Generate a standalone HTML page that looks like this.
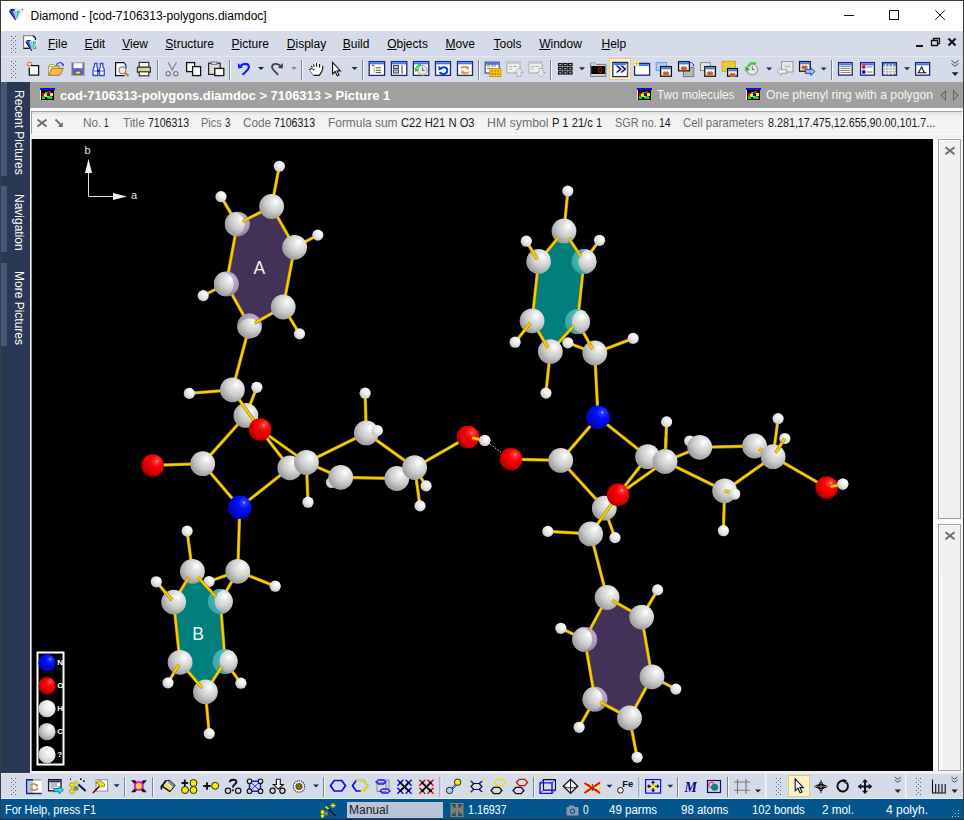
<!DOCTYPE html>
<html><head><meta charset="utf-8"><style>*{margin:0;padding:0;box-sizing:border-box}
html,body{width:964px;height:820px;overflow:hidden;background:#f0f0f0;font-family:"Liberation Sans",sans-serif;font-size:12px;color:#000}
.a{position:absolute}
svg.a{overflow:visible}
#frame{left:0;top:0;width:964px;height:820px;border:1px solid #3c3c3c;border-bottom-color:#2a2a2a;z-index:50}
#title{left:0;top:0;width:964px;height:31px;background:#fff}
.tt{font-size:12px;line-height:14px;color:#000;white-space:nowrap}
#menu{left:1px;top:31px;width:962px;height:25px;background:#d6dbe9}
#tb1{left:1px;top:56px;width:962px;height:26px;background:#d6dbe9;border-top:1px solid #e4e7f0}
.mi{position:absolute;top:37px;font-size:12px;color:#000;line-height:14px;white-space:nowrap}
.mi u{text-decoration:underline;text-underline-offset:1px}
#side{left:1px;top:82px;width:29px;height:691px;background:#293955}
#side .strip{left:0;width:6px;background:#44587a}
.sidet{color:#fff;font-size:12px;line-height:12px;white-space:nowrap;transform-origin:0 0;transform:rotate(90deg)}
#hdr{left:30px;top:82px;width:933px;height:26px;background:#a0a0a0}
.ht{top:88px;font-size:13px;font-weight:bold;color:#fff;line-height:15px;white-space:nowrap}
.htr{top:88px;font-size:12px;color:#f4f4f4;line-height:15px;white-space:nowrap}
#info{left:30px;top:108px;width:933px;height:31px;background:#fbfbfb}
#ibox{left:1px;top:3px;width:931px;height:23px;background:linear-gradient(#dedede,#eeeeee 3px,#f3f3f3 6px);border:1px solid #a0a0a0;border-right:none;border-bottom:none}
#istrip{left:1px;top:27px;width:931px;height:3px;background:#efefef}
.il{top:116px;color:#6d6d6d;line-height:14px;white-space:nowrap}
.iv{top:116px;color:#1a1a1a;line-height:14px;white-space:nowrap}
#canvas{left:32px;top:139px;width:901px;height:632px;background:#000}
#rp{left:933px;top:139px;width:30px;height:633px;background:#f8f8f8}
.rbox{left:5px;width:23px;background:#f0f0f0;border:1px solid #a0a0a0;box-shadow:inset 1px 1px #ffffff}
#tb2{left:1px;top:773px;width:962px;height:26px;background:#d6dbe9;border-top:1px solid #e6e9f2;border-bottom:1px solid #eceef4}
#status{left:1px;top:799px;width:962px;height:20px;background:#01568f}
.st{top:805px;color:#fff;line-height:12px;white-space:nowrap}
</style></head><body>
<div id="title" class="a"></div>
<div class="a tt" style="left:30.5px;top:9px">Diamond - [cod-7106313-polygons.diamdoc]</div>
<svg class="a" style="left:0;top:0;z-index:5" width="964" height="820"><path d="M9 11l2-2h10.5l2 2-7 9h-1z" fill="#e4f2f6" stroke="#b8c8d0" stroke-width="0.5"/><path d="M9 11l6.5 9 1-1.5-3.5-7.5z" fill="#2858e0"/><path d="M9.3 10.6l1.8-1.6h3.4v1.9h-4z" fill="#20208a"/><path d="M16.8 10.8h3.6l-3.3 7.5-1-0.5z" fill="#3cc0b4"/><path d="M13.5 11h3l0.3 8.5h-1.2z" fill="#9ec4f0"/><path d="M9.3 11.3l6.2 8.6" stroke="#10102a" stroke-width="1"/><rect x="22" y="9" width="1" height="1" fill="#3050a0"/><path d="M844 15.5h10" stroke="#111" stroke-width="1"/><rect x="889.5" y="10.5" width="9" height="9" fill="none" stroke="#111" stroke-width="1"/><path d="M935.3 10.3l9.6 9.6M944.9 10.3l-9.6 9.6" stroke="#111" stroke-width="1"/><rect x="916" y="45" width="7" height="2" fill="#111"/><path d="M931.5 40.5h6v5h-6z" fill="none" stroke="#111" stroke-width="1.3"/><path d="M933.5 40.5v-2h6v5h-2" fill="none" stroke="#111" stroke-width="1.3"/><path d="M948.5 38.5l7 7M955.5 38.5l-7 7" stroke="#111" stroke-width="2.2"/><rect x="40.0" y="88.0" width="15" height="2" fill="#0a0af0"/><rect x="41.0" y="90.0" width="13" height="10" fill="#000"/><rect x="40.0" y="90.0" width="1" height="10" fill="#e8e8e8"/><rect x="42.0" y="93.0" width="3" height="3" fill="#ff0000"/><rect x="45.0" y="92.0" width="3" height="3" fill="#00f000"/><rect x="48.0" y="91.0" width="3" height="3" fill="#ff0000"/><rect x="44.0" y="94.0" width="3" height="3" fill="#f8f800"/><rect x="47.0" y="93.0" width="2" height="3" fill="#0010f0"/><rect x="50.0" y="93.0" width="3" height="3" fill="#f8f800"/><rect x="47.0" y="96.0" width="2" height="2" fill="#00f8f8"/><rect x="42.0" y="96.0" width="3" height="3" fill="#00e000"/><rect x="49.0" y="96.0" width="3" height="3" fill="#00e000"/><rect x="52.0" y="97.0" width="1" height="2" fill="#ff0000"/><rect x="47.0" y="98.0" width="2" height="1" fill="#ff0000"/><rect x="42.0" y="98.0" width="1" height="1" fill="#b0a000"/><rect x="637.0" y="88.0" width="15" height="2" fill="#0a0af0"/><rect x="638.0" y="90.0" width="13" height="10" fill="#000"/><rect x="637.0" y="90.0" width="1" height="10" fill="#e8e8e8"/><rect x="639.0" y="93.0" width="3" height="3" fill="#ff0000"/><rect x="642.0" y="92.0" width="3" height="3" fill="#00f000"/><rect x="645.0" y="91.0" width="3" height="3" fill="#ff0000"/><rect x="641.0" y="94.0" width="3" height="3" fill="#f8f800"/><rect x="644.0" y="93.0" width="2" height="3" fill="#0010f0"/><rect x="647.0" y="93.0" width="3" height="3" fill="#f8f800"/><rect x="644.0" y="96.0" width="2" height="2" fill="#00f8f8"/><rect x="639.0" y="96.0" width="3" height="3" fill="#00e000"/><rect x="646.0" y="96.0" width="3" height="3" fill="#00e000"/><rect x="649.0" y="97.0" width="1" height="2" fill="#ff0000"/><rect x="644.0" y="98.0" width="2" height="1" fill="#ff0000"/><rect x="639.0" y="98.0" width="1" height="1" fill="#b0a000"/><rect x="746.0" y="88.0" width="15" height="2" fill="#0a0af0"/><rect x="747.0" y="90.0" width="13" height="10" fill="#000"/><rect x="746.0" y="90.0" width="1" height="10" fill="#e8e8e8"/><rect x="748.0" y="93.0" width="3" height="3" fill="#ff0000"/><rect x="751.0" y="92.0" width="3" height="3" fill="#00f000"/><rect x="754.0" y="91.0" width="3" height="3" fill="#ff0000"/><rect x="750.0" y="94.0" width="3" height="3" fill="#f8f800"/><rect x="753.0" y="93.0" width="2" height="3" fill="#0010f0"/><rect x="756.0" y="93.0" width="3" height="3" fill="#f8f800"/><rect x="753.0" y="96.0" width="2" height="2" fill="#00f8f8"/><rect x="748.0" y="96.0" width="3" height="3" fill="#00e000"/><rect x="755.0" y="96.0" width="3" height="3" fill="#00e000"/><rect x="758.0" y="97.0" width="1" height="2" fill="#ff0000"/><rect x="753.0" y="98.0" width="2" height="1" fill="#ff0000"/><rect x="748.0" y="98.0" width="1" height="1" fill="#b0a000"/><path d="M945.5 91v8.7l-4.4-4.35z" fill="none" stroke="#666" stroke-width="1.1"/><path d="M953.5 91v8.7l4.4-4.35z" fill="none" stroke="#666" stroke-width="1.1"/><path d="M37.5 119.5l9 7M46.5 119.5l-9 7" stroke="#6e6e6e" stroke-width="2"/><path d="M55.5 119.5l6.5 6.5" stroke="#6e6e6e" stroke-width="1.8"/><path d="M62.8 122v5h-5z" fill="#6e6e6e"/><path d="M945.5 147.3l9 7M954.5 147.3l-9 7" stroke="#6e6e6e" stroke-width="2"/><path d="M945.5 532.3l9 7M954.5 532.3l-9 7" stroke="#6e6e6e" stroke-width="2"/><rect x="940.5" y="570" width="1" height="200" fill="#ffffff"/><circle cx="322.5" cy="812" r="2.2" fill="#f0f000" stroke="#222" stroke-width="0.4"/><circle cx="322.5" cy="816" r="1.8" fill="#f0f000"/><circle cx="326" cy="813.5" r="2" fill="#8a8a30"/><path d="M325.5 806.5l10.5 9.5" stroke="#0a0a3a" stroke-width="1.6"/><path d="M325.5 806.5l3 2.7" stroke="#f0e000" stroke-width="1.8"/><path d="M333 803v5M330.5 805.5h5M331.3 803.8l3.4 3.4M334.7 803.8l-3.4 3.4" stroke="#f0f000" stroke-width="0.9"/><rect x="450.5" y="803" width="13" height="14" fill="#8a8060"/><path d="M452 804.5l3.5 3.5M462 804.5l-3.5 3.5M452 815.5l3.5-3.5M462 815.5l-3.5-3.5" stroke="#01568f" stroke-width="1.4"/><path d="M452.5 804.5h3v1.2M461.5 804.5h-3v1.2M452.5 815.5h3v-1.2M461.5 815.5h-3v-1.2" stroke="#01568f" stroke-width="1"/><rect x="566.5" y="807" width="12" height="8.5" rx="1" fill="#8a9aaa"/><rect x="569" y="805.5" width="5" height="2" fill="#8a9aaa"/><circle cx="572.5" cy="811.2" r="2.6" fill="#01568f"/><circle cx="572.5" cy="811.2" r="1.6" fill="#8a9aaa"/><rect x="958" y="816" width="1" height="1" fill="#c0d0e0"/><rect x="955" y="816" width="1" height="1" fill="#c0d0e0"/><rect x="952" y="816" width="1" height="1" fill="#c0d0e0"/><rect x="958" y="813" width="1" height="1" fill="#c0d0e0"/><rect x="955" y="813" width="1" height="1" fill="#c0d0e0"/><rect x="958" y="810" width="1" height="1" fill="#c0d0e0"/></svg>
<div id="menu" class="a"></div>
<div class="mi" style="left:48.0px"><u>F</u>ile</div><div class="mi" style="left:84.5px"><u>E</u>dit</div><div class="mi" style="left:122.2px"><u>V</u>iew</div><div class="mi" style="left:165.3px"><u>S</u>tructure</div><div class="mi" style="left:231.5px"><u>P</u>icture</div><div class="mi" style="left:286.8px"><u>D</u>isplay</div><div class="mi" style="left:342.7px"><u>B</u>uild</div><div class="mi" style="left:387.2px"><u>O</u>bjects</div><div class="mi" style="left:445.6px"><u>M</u>ove</div><div class="mi" style="left:493.5px"><u>T</u>ools</div><div class="mi" style="left:539.2px"><u>W</u>indow</div><div class="mi" style="left:601.5px"><u>H</u>elp</div>
<div id="tb1" class="a"></div>
<svg class="a" style="left:0;top:0" width="964" height="820"><rect x="11" y="36" width="1" height="1" fill="#5a6684"/><rect x="15" y="36" width="1" height="1" fill="#5a6684"/><rect x="13" y="38" width="1" height="1" fill="#5a6684"/><rect x="11" y="40" width="1" height="1" fill="#5a6684"/><rect x="15" y="40" width="1" height="1" fill="#5a6684"/><rect x="13" y="42" width="1" height="1" fill="#5a6684"/><rect x="11" y="44" width="1" height="1" fill="#5a6684"/><rect x="15" y="44" width="1" height="1" fill="#5a6684"/><rect x="13" y="46" width="1" height="1" fill="#5a6684"/><rect x="11" y="48" width="1" height="1" fill="#5a6684"/><rect x="15" y="48" width="1" height="1" fill="#5a6684"/><rect x="13" y="50" width="1" height="1" fill="#5a6684"/><rect x="11" y="52" width="1" height="1" fill="#5a6684"/><rect x="15" y="52" width="1" height="1" fill="#5a6684"/><path d="M23.6 35.7h9.5l2.5 2.5v10.2h-12z" fill="#fff" stroke="#777" stroke-width="1.1"/><path d="M23.6 48.4h9M33 35.7l2.4 2.4v2" stroke="#111" stroke-width="1.2" fill="none"/><path d="M25.5 41.5l2-1.5h10l1.5 1.5-7 9.5h-1z" fill="#e4f2f6"/><path d="M25.5 41.5l6 9.5 1-1.5-3.5-8z" fill="#2858e0"/><path d="M26 41l1.5-1h3v1.6h-3.8z" fill="#20208a"/><path d="M33 41.3h3.5l-3.3 8-1-0.5z" fill="#3cc0b4"/><path d="M29.5 41.5h3l0.3 9h-1.2z" fill="#9ec4f0"/><path d="M25.8 41.8l5.8 9" stroke="#10102a" stroke-width="1"/><rect x="11" y="61" width="1" height="1" fill="#5a6684"/><rect x="15" y="61" width="1" height="1" fill="#5a6684"/><rect x="13" y="63" width="1" height="1" fill="#5a6684"/><rect x="11" y="65" width="1" height="1" fill="#5a6684"/><rect x="15" y="65" width="1" height="1" fill="#5a6684"/><rect x="13" y="67" width="1" height="1" fill="#5a6684"/><rect x="11" y="69" width="1" height="1" fill="#5a6684"/><rect x="15" y="69" width="1" height="1" fill="#5a6684"/><rect x="13" y="71" width="1" height="1" fill="#5a6684"/><rect x="11" y="73" width="1" height="1" fill="#5a6684"/><rect x="15" y="73" width="1" height="1" fill="#5a6684"/><rect x="13" y="75" width="1" height="1" fill="#5a6684"/><rect x="11" y="77" width="1" height="1" fill="#5a6684"/><rect x="15" y="77" width="1" height="1" fill="#5a6684"/><path d="M29.5 61.5v5.6M26.7 64.3h5.6M27.5 62.3l4 4M31.5 62.3l-4 4" stroke="#e06a28" stroke-width="1.2"/><circle cx="29.5" cy="64.3" r="1.2" fill="#fff"/><path d="M31 65.6h7.6v9.6h-9.3v-7.5" fill="#fff" stroke="#111" stroke-width="1.3"/><path d="M48.8 66.5l1-2h4l1 1h4.5v2.5" fill="#fff8a8" stroke="#a89a50" stroke-width="0.9"/><path d="M48.6 75.2v-8.6h10.2v1.8" fill="#fff3a0" stroke="#a89a50" stroke-width="0.9"/><path d="M48.6 75.3l3.2-7h11.5l-3.4 7z" fill="#ffb84a" stroke="#8a7040" stroke-width="0.9"/><path d="M56.3 65.5c0.5-3 5-4 6.5-1.2" stroke="#2c40d8" stroke-width="1.2" fill="none"/><path d="M61.2 64.6l2.6-0.9 0 2.8z" fill="#2c40d8"/><rect x="71.5" y="62.5" width="13" height="13" fill="#6466d2" stroke="#b3ab8c" stroke-width="1.1"/><rect x="73.6" y="63.2" width="8.8" height="5" fill="#fff"/><rect x="74.5" y="70.6" width="7" height="4.4" fill="#555"/><rect x="75.7" y="71.6" width="4.6" height="2.2" fill="#d9d59c"/><rect x="77.2" y="68.3" width="1.6" height="0.9" fill="#3040c0"/><path d="M93 75.5v-6l1.5-3v-3h2.5v3l0.7 3v6z M99.5 75.5v-6l0.8-3v-3h2.5v3l1.5 3v6z" fill="#fff" stroke="#2f4fc8" stroke-width="1.3"/><path d="M93.7 71h3.8M100.2 71h4" stroke="#2f4fc8" stroke-width="1.1"/><path d="M97.6 69v2.5h2" stroke="#1a2a80" stroke-width="1"/><path d="M124 62.6h-8.4v13h9" fill="#fff" stroke="#111" stroke-width="1.2"/><path d="M124 62.6l2 2.5v4" fill="none" stroke="#2a2a7a" stroke-width="1.1"/><circle cx="122.4" cy="70.3" r="3.4" fill="#e8eef6" stroke="#8a8a8a" stroke-width="1.2"/><path d="M124.8 72.8l3.8 3.2" stroke="#e07818" stroke-width="2.2"/><rect x="139.2" y="62.4" width="9.6" height="5" fill="#fff" stroke="#333" stroke-width="1.2"/><rect x="137.4" y="67.2" width="13" height="5" fill="#d8d4a8" stroke="#333" stroke-width="1.2"/><rect x="139.2" y="71.8" width="9.6" height="4" fill="#fff" stroke="#333" stroke-width="1.2"/><rect x="138.6" y="68.2" width="1.2" height="1.2" fill="#e8d800"/><rect x="140.6" y="68.2" width="1.2" height="1.2" fill="#e8d800"/><rect x="157.0" y="60" width="1" height="20" fill="#7a8294"/><rect x="158.0" y="60" width="1" height="20" fill="#f4f6fa"/><path d="M168 62.4l4.8 8M176.5 62.4l-4.8 8" stroke="#868686" stroke-width="1.2"/><circle cx="168.2" cy="73.7" r="2.2" fill="none" stroke="#777" stroke-width="1.1"/><circle cx="175.8" cy="73.7" r="2.2" fill="none" stroke="#777" stroke-width="1.1"/><rect x="186.6" y="62.6" width="8" height="9" fill="#fff" stroke="#111" stroke-width="1.3"/><rect x="192.6" y="66.6" width="8" height="9" fill="#fff" stroke="#111" stroke-width="1.3"/><rect x="208.6" y="63.2" width="11.6" height="11.2" fill="#dcdcdc" stroke="#222" stroke-width="1.2"/><rect x="211.5" y="62" width="5.5" height="2.3" fill="#eee" stroke="#555" stroke-width="0.8"/><rect x="214.8" y="68.4" width="9" height="7.2" fill="#fff" stroke="#111" stroke-width="1.3"/><rect x="229.0" y="60" width="1" height="20" fill="#7a8294"/><rect x="230.0" y="60" width="1" height="20" fill="#f4f6fa"/><path d="M240 66.5c2-3 8-4 9 0c0.6 2.5-3 5-6.5 8.3" stroke="#0a22ff" stroke-width="2.1" fill="none"/><path d="M237.8 63l0.4 5.6 5-0.9z" fill="#0a22ff"/><path d="M258.0 67.0h6l-3 3z" fill="#111a40"/><path d="M281 66.5c-2-3-8-4-9 0c-0.6 2.5 3 5 6.2 8.3" stroke="#404040" stroke-width="1.8" fill="none"/><path d="M283 63l-0.3 5.6-5-0.9z" fill="#404040"/><path d="M291.0 67.0h6l-3 3z" fill="#8a8a8a"/><rect x="301.0" y="60" width="1" height="20" fill="#7a8294"/><rect x="302.0" y="60" width="1" height="20" fill="#f4f6fa"/><path d="M309.2 69.6l1.8-1.5 1.6 0.2-1-2.6 2-2 1.8-1 1.4-0.4 1.6 0.6 1.6 1 1.8 1.2 1.4 0.8v2.8l-1.4 3.6-2.2 3.1h-5.6z" fill="#fff"/><path d="M313.6 75.4h5.6M319.2 75.4l2.2-3.2 1.3-3.6v-2.8M309.3 70l1.3-1.3h2M313.5 64.2l0.8 2.3M316.6 62.9v3.9M319.6 64v3.5M311.2 66.1l1.3 1.2M312.8 69.6h1.6" stroke="#111" stroke-width="1.15" fill="none"/><path d="M309.6 70.4l4 5" stroke="#777" stroke-width="1"/><path d="M332.6 62.5v11.5l2.6-2.5 2 4.2 1.8-0.8-2-4h3.4z" fill="#fff" stroke="#111" stroke-width="1.1"/><path d="M351.6 67.0h6l-3 3z" fill="#1b2a4a"/><rect x="362.0" y="60" width="1" height="20" fill="#7a8294"/><rect x="363.0" y="60" width="1" height="20" fill="#f4f6fa"/><rect x="369.2" y="61.6" width="15.4" height="13.8" fill="#ffffff" stroke="#24246a" stroke-width="1.3"/><rect x="369.9" y="62.3" width="14.0" height="2" fill="#3c78f0"/><path d="M372.5 65.5h1.5v6.8M374 67.8h1.5M374 70.3h1.5M374 72.5h1.5" stroke="#c8c080" stroke-width="1" fill="none"/><path d="M376 67.8h5M376 70.3h5M376 72.5h5" stroke="#555" stroke-width="1.1"/><path d="M372 65.3h2" stroke="#555" stroke-width="1"/><rect x="391.4" y="61.6" width="15.4" height="13.8" fill="#ffffff" stroke="#24246a" stroke-width="1.3"/><rect x="392.1" y="62.3" width="14.0" height="2" fill="#3c78f0"/><rect x="393.5" y="65.5" width="5" height="3" fill="#a8d0f8" stroke="#444" stroke-width="1"/><rect x="393.5" y="70" width="5" height="3" fill="#a8d0f8" stroke="#444" stroke-width="1"/><path d="M402 65.2v8.5" stroke="#444" stroke-width="1.1"/><rect x="413.4" y="61.6" width="15.4" height="13.8" fill="#ffffff" stroke="#24246a" stroke-width="1.3"/><rect x="414.1" y="62.3" width="14.0" height="2" fill="#3c78f0"/><circle cx="422.5" cy="70.3" r="4.8" fill="#e6e6e6" stroke="#9a9a9a" stroke-width="1"/><path d="M422.5 67.5v3h2" stroke="#555" stroke-width="0.9" fill="none"/><path d="M421 65h-2.2l-2.5 2.8" stroke="#30d030" stroke-width="1.9" fill="none"/><path d="M414.5 67.5l4.6 2.2-3.8 2.2z" fill="#28c028"/><rect x="435.5" y="61.6" width="15.0" height="13.8" fill="#ffffff" stroke="#24246a" stroke-width="1.3"/><rect x="436.2" y="62.3" width="13.6" height="2" fill="#3c78f0"/><path d="M440 72c0.5 2.5 7 3 7.3-1.2 0.3-3.5-4-4.5-6-2.5" stroke="#0a3ae8" stroke-width="2" fill="none"/><path d="M438.3 65.8l0.4 4.8 4.2-1.6z" fill="#0a3ae8"/><rect x="457.5" y="61.6" width="15.0" height="13.8" fill="#ffffff" stroke="#24246a" stroke-width="1.3"/><rect x="458.2" y="62.3" width="13.6" height="2" fill="#3c78f0"/><path d="M461 68.5c1-2.2 5.5-2.5 7 0M469 71.5c-1 2.2-5.5 2.5-7 0" stroke="#d09a30" stroke-width="1.8" fill="none"/><path d="M468.6 66l0.4 3.5-3.2-0.6zM461.4 74l-0.4-3.5 3.2 0.6z" fill="#d09a30"/><rect x="478.0" y="60" width="1" height="20" fill="#7a8294"/><rect x="479.0" y="60" width="1" height="20" fill="#f4f6fa"/><rect x="485.2" y="62.2" width="14.0" height="10.8" fill="#ffffff" stroke="#5050a0" stroke-width="1.3"/><rect x="485.9" y="62.9" width="12.6" height="2" fill="#3c78f0"/><path d="M487 66h3M491 66h5M487 68.5h3M491 68.5h3" stroke="#666" stroke-width="0.9"/><rect x="486.5" y="64.5" width="1.5" height="1.5" fill="#e8c000"/><rect x="489.8" y="68.6" width="11.2" height="8" fill="#f8c800" stroke="#c89000" stroke-width="0.8"/><path d="M491.5 70.8h1.5M494.5 70.8h1.5M497.5 70.8h1.5M491.5 74h1.5M494.5 74h1.5M497.5 74h1.5" stroke="#a07000" stroke-width="1.3"/><rect x="507.0" y="62" width="13" height="11" fill="#f0f0f0" stroke="#a8a8a8" stroke-width="1"/><rect x="507.5" y="62.5" width="12" height="1.6" fill="#c8c8c8"/><path d="M509.0 66.5h3M513.0 66.5h4M509.0 69h3" stroke="#aaa" stroke-width="0.9"/><path d="M517.0 76.5v-4h-2.5l4.5-4.5 4.5 4.5h-2.5v4z" fill="#e8e8e8" stroke="#b0b0b0" stroke-width="0.9"/><rect x="529.0" y="62" width="13" height="11" fill="#f0f0f0" stroke="#a8a8a8" stroke-width="1"/><rect x="529.5" y="62.5" width="12" height="1.6" fill="#c8c8c8"/><path d="M531.0 66.5h3M535.0 66.5h4M531.0 69h3" stroke="#aaa" stroke-width="0.9"/><path d="M539.0 68.5v4h-2.5l4.5 4.5 4.5-4.5h-2.5v-4z" fill="#e8e8e8" stroke="#b0b0b0" stroke-width="0.9"/><rect x="550.0" y="60" width="1" height="20" fill="#7a8294"/><rect x="551.0" y="60" width="1" height="20" fill="#f4f6fa"/><rect x="558.6" y="63.6" width="3.4" height="2.2" fill="#fff" stroke="#111" stroke-width="1.3"/><rect x="563.6" y="63.6" width="3.4" height="2.2" fill="#fff" stroke="#111" stroke-width="1.3"/><rect x="568.6" y="63.6" width="3.4" height="2.2" fill="#fff" stroke="#111" stroke-width="1.3"/><rect x="558.6" y="67.7" width="3.4" height="2.2" fill="#fff" stroke="#111" stroke-width="1.3"/><rect x="563.6" y="67.7" width="3.4" height="2.2" fill="#fff" stroke="#111" stroke-width="1.3"/><rect x="568.6" y="67.7" width="3.4" height="2.2" fill="#fff" stroke="#111" stroke-width="1.3"/><rect x="558.6" y="71.8" width="3.4" height="2.2" fill="#fff" stroke="#111" stroke-width="1.3"/><rect x="563.6" y="71.8" width="3.4" height="2.2" fill="#fff" stroke="#111" stroke-width="1.3"/><rect x="568.6" y="71.8" width="3.4" height="2.2" fill="#fff" stroke="#111" stroke-width="1.3"/><path d="M579.0 67.3h6l-3 3z" fill="#1b2a4a"/><path d="M590.6 76.4v-13.5h4.5l1 1.5h9.8v12z" fill="#d8d8d8" stroke="#777" stroke-width="1"/><rect x="591" y="62.6" width="4.5" height="2.2" fill="#a8d0f8"/><rect x="591.2" y="66" width="14" height="8" fill="#000"/><path d="M600.2 67l2 3-2 3-2-3z" fill="none" stroke="#f02020" stroke-width="0.9"/><rect x="609.5" y="58.5" width="21" height="21" fill="#fdf3c8" stroke="#e8c878" stroke-width="1"/><rect x="612.8" y="62.4" width="14.8" height="14.2" fill="#ffffff" stroke="#24246a" stroke-width="1.3"/><rect x="613.5" y="63.1" width="13.4" height="2" fill="#3c78f0"/><path d="M615.5 65.5l4 3.5-4 3.5h2.5l4-3.5-4-3.5zM620 65.5l4 3.5-4 3.5h2.5l4-3.5-4-3.5z" fill="#20206a"/><rect x="626" y="64" width="1.3" height="11.5" fill="#d8d8d8"/><rect x="634.6" y="63.4" width="15.0" height="11.8" fill="#ffffff" stroke="#24246a" stroke-width="1.3"/><rect x="635.3" y="64.1" width="13.6" height="2" fill="#3c78f0"/><rect x="634" y="61" width="5" height="5" fill="#f8f0a0"/><path d="M636.5 61v5M634 63.5h5" stroke="#e0c000" stroke-width="0.8"/><rect x="656.2" y="62.6" width="10.5" height="8" fill="#a8d0f8" stroke="#58a0f0" stroke-width="1"/><rect x="660.6" y="66.6" width="10.8" height="9.6" fill="#ffffff" stroke="#111" stroke-width="1.3"/><rect x="661.3" y="67.3" width="9.4" height="2" fill="#3c78f0"/><path d="M662.5 73.0l2 -2 1.5 1 1.5 -1 2 2 -1 2.5h-5z" fill="#d07020"/><circle cx="665.5" cy="73.5" r="1" fill="#e03030"/><rect x="683.4" y="67.6" width="10.4" height="9" fill="#b8b8b8" stroke="#777" stroke-width="1"/><rect x="678.6" y="61.7" width="10.8" height="9.1" fill="#ffffff" stroke="#111" stroke-width="1.3"/><rect x="679.3" y="62.4" width="9.4" height="2" fill="#3c78f0"/><path d="M680.5 68.0l2 -2 1.5 1 1.5 -1 2 2 -1 2.5h-5z" fill="#d07020"/><circle cx="683.5" cy="68.5" r="1" fill="#e03030"/><path d="M688 64c1.5-2 5-2 5.5 1" stroke="#2c40d8" stroke-width="1" fill="none"/><path d="M692 65l2.3-0.5-0.3 2z" fill="#2c40d8"/><rect x="700.5" y="62.6" width="9.8" height="8" fill="#e8e8e8" stroke="#888" stroke-width="1"/><rect x="704.8" y="66.6" width="10.6" height="9.6" fill="#ffffff" stroke="#111" stroke-width="1.3"/><rect x="705.5" y="67.3" width="9.2" height="2" fill="#3c78f0"/><path d="M706.5 73.0l2 -2 1.5 1 1.5 -1 2 2 -1 2.5h-5z" fill="#d07020"/><circle cx="709.5" cy="73.5" r="1" fill="#e03030"/><rect x="722" y="61.2" width="13.6" height="10" fill="#f8c800" stroke="#b09000" stroke-width="0.6"/><path d="M722 64.5h13.6M722 67.8h13.6M726.5 61.2v10M731 61.2v10" stroke="#c8c8a0" stroke-width="0.9"/><rect x="727.6" y="68.6" width="9.8" height="7.6" fill="#ffffff" stroke="#111" stroke-width="1.3"/><rect x="728.3" y="69.3" width="8.4" height="2" fill="#3c78f0"/><path d="M729.0 74.5l2 -2 1.5 1 1.5 -1 2 2 -1 2.5h-5z" fill="#d07020"/><circle cx="732.0" cy="75.0" r="1" fill="#e03030"/><circle cx="752.2" cy="69.5" r="5.4" fill="#e8e8e8" stroke="#9a9a9a" stroke-width="1.1"/><path d="M752.3 66.3v3.3h2.2" stroke="#555" stroke-width="0.9" fill="none"/><path d="M750 67l1-1.2" stroke="#a8d8f8" stroke-width="2"/><path d="M756 63.3h-5.2l-3.2 3.5" stroke="#30d030" stroke-width="2" fill="none"/><path d="M744.8 66.6l5.4 2.6-4.4 2.6z" fill="#28c028"/><path d="M766.2 67.6h6l-3 3z" fill="#1b2a4a"/><rect x="781.5" y="61.5" width="11.5" height="10.5" fill="#e8e8e8" stroke="#999" stroke-width="1"/><path d="M785 64.5l2 2 2-2 1.5 3h-6z" fill="#c0c0c0"/><path d="M777.3 71.5l4-4v2.2h5.5v3.6h-5.5v2.2z" fill="#f0f0f0" stroke="#999" stroke-width="0.9"/><rect x="799.6" y="61.6" width="10.6" height="9.6" fill="#ffffff" stroke="#111" stroke-width="1.3"/><rect x="800.3" y="62.3" width="9.2" height="2" fill="#3c78f0"/><path d="M801.0 67.0l2 -2 1.5 1 1.5 -1 2 2 -1 2.5h-5z" fill="#d07020"/><circle cx="804.0" cy="67.5" r="1" fill="#e03030"/><path d="M814.8 71.5l-4-4v2.2h-5.5v3.6h5.5v2.2z" fill="#90c8f8" stroke="#1838a8" stroke-width="1"/><path d="M820.7 67.6h6l-3 3z" fill="#1b2a4a"/><rect x="831.0" y="60" width="1" height="20" fill="#7a8294"/><rect x="832.0" y="60" width="1" height="20" fill="#f4f6fa"/><rect x="838.6" y="62.6" width="13.6" height="12.5" fill="#ffffff" stroke="#24246a" stroke-width="1.3"/><rect x="839.3" y="63.3" width="12.2" height="2" fill="#3c78f0"/><path d="M840.5 66.5h10M840.5 68.5h10M840.5 70.5h10M840.5 72.5h10" stroke="#777" stroke-width="0.9"/><rect x="860.6" y="62.6" width="13.8" height="12.6" fill="#ffffff" stroke="#24246a" stroke-width="1.3"/><rect x="861.3" y="63.3" width="12.4" height="2" fill="#3c78f0"/><circle cx="863.8" cy="67" r="1.9" fill="#f01010"/><circle cx="863.8" cy="72" r="1.9" fill="#1010f0"/><path d="M866.5 67h6M866.5 72h6" stroke="#777" stroke-width="1"/><rect x="882.5" y="62.6" width="14.0" height="12.6" fill="#b8b8b8" stroke="#24246a" stroke-width="1.3"/><rect x="883.2" y="63.3" width="12.6" height="2" fill="#3c78f0"/><path d="M883 67.6h13M883 70.3h13M883 73h13M885.5 64v11M889 64v11M892.5 64v11" stroke="#f0f0f0" stroke-width="1"/><path d="M904.0 67.3h6l-3 3z" fill="#1b2a4a"/><rect x="915.6" y="62.6" width="14.0" height="12.6" fill="#ffffff" stroke="#24246a" stroke-width="1.3"/><rect x="916.3" y="63.3" width="12.6" height="2" fill="#3c78f0"/><path d="M917.5 72.8h9M918.5 72.5l3.2-5.5 2.5 5.5" stroke="#111" stroke-width="1.1" fill="none"/><path d="M951.5 60.5l3.5 2.8 3.5-2.8M951.5 63.5l3.5 2.8 3.5-2.8" stroke="#3a4a6a" stroke-width="1" fill="none"/><path d="M951.6 72.3h7l-3.5 3.8z" fill="#222"/></svg>
<div id="side" class="a"><div class="strip a" style="top:0;height:94px"></div><div class="strip a" style="top:104px;height:66px"></div><div class="strip a" style="top:181px;height:83px"></div></div>
<div class="a sidet" style="left:25px;top:89.5px">Recent Pictures</div>
<div class="a sidet" style="left:25px;top:193.5px">Navigation</div>
<div class="a sidet" style="left:25px;top:270.5px">More Pictures</div>
<div id="hdr" class="a"></div>
<span class="a ht" style="left:60.40px;top:88.00px;font-size:13px;font-weight:bold;transform:scaleX(0.9933);transform-origin:0 0">cod-7106313-polygons.diamdoc &gt; 7106313 &gt; Picture 1</span><span class="a htr" style="left:657.20px;top:87.80px;font-size:12px;transform:scaleX(0.9754);transform-origin:0 0">Two molecules</span><span class="a htr" style="left:766.20px;top:87.80px;font-size:12px;transform:scaleX(1.0133);transform-origin:0 0">One phenyl ring with a polygon</span>
<div id="info" class="a"><div class="a" id="ibox"></div><div class="a" id="istrip"></div></div>
<span class="a il" style="left:82.50px;top:116.00px;font-size:12px;transform:scaleX(0.9786);transform-origin:0 0">No.</span><span class="a iv" style="left:104.20px;top:116.00px;font-size:12px;transform:scaleX(0.6917);transform-origin:0 0">1</span><span class="a il" style="left:122.50px;top:116.00px;font-size:12px;transform:scaleX(0.9753);transform-origin:0 0">Title</span><span class="a iv" style="left:147.60px;top:116.00px;font-size:12px;transform:scaleX(0.8801);transform-origin:0 0">7106313</span><span class="a il" style="left:201.20px;top:116.00px;font-size:12px;transform:scaleX(0.9095);transform-origin:0 0">Pics</span><span class="a iv" style="left:225.20px;top:116.00px;font-size:12px;transform:scaleX(0.7970);transform-origin:0 0">3</span><span class="a il" style="left:243.40px;top:116.00px;font-size:12px;transform:scaleX(0.9791);transform-origin:0 0">Code</span><span class="a iv" style="left:274.30px;top:116.00px;font-size:12px;transform:scaleX(0.8801);transform-origin:0 0">7106313</span><span class="a il" style="left:328.00px;top:116.00px;font-size:12px;transform:scaleX(0.9929);transform-origin:0 0">Formula sum</span><span class="a iv" style="left:400.90px;top:116.00px;font-size:12px;transform:scaleX(0.9352);transform-origin:0 0">C22 H21 N O3</span><span class="a il" style="left:487.00px;top:116.00px;font-size:12px;transform:scaleX(1.0267);transform-origin:0 0">HM symbol</span><span class="a iv" style="left:552.30px;top:116.00px;font-size:12px;transform:scaleX(0.9312);transform-origin:0 0">P 1 21/c 1</span><span class="a il" style="left:615.30px;top:116.00px;font-size:12px;transform:scaleX(0.9065);transform-origin:0 0">SGR no.</span><span class="a iv" style="left:659.30px;top:116.00px;font-size:12px;transform:scaleX(0.8764);transform-origin:0 0">14</span><span class="a il" style="left:683.40px;top:116.00px;font-size:12px;transform:scaleX(0.9516);transform-origin:0 0">Cell parameters</span><span class="a iv" style="left:768.20px;top:116.00px;font-size:12px;transform:scaleX(0.8954);transform-origin:0 0">8.281,17.475,12.655,90.00,101.7...</span>
<div id="canvas" class="a"></div><div class="a" style="left:31px;top:139px;width:1px;height:632px;background:#9a9a9a"></div>
<svg class="a" style="left:32px;top:139px" width="901" height="632"><defs>
<radialGradient id="gC" cx="0.64" cy="0.34" r="0.8" fx="0.67" fy="0.3">
<stop offset="0" stop-color="#ffffff"/><stop offset="0.06" stop-color="#fafafa"/><stop offset="0.22" stop-color="#e6e6e6"/><stop offset="0.5" stop-color="#cdcdcd"/><stop offset="0.78" stop-color="#a6a6a6"/><stop offset="1" stop-color="#949494"/></radialGradient>
<radialGradient id="gH" cx="0.66" cy="0.32" r="0.85" fx="0.68" fy="0.3">
<stop offset="0" stop-color="#ffffff"/><stop offset="0.3" stop-color="#f2f2f2"/><stop offset="0.7" stop-color="#d6d6d6"/><stop offset="1" stop-color="#a0a0a0"/></radialGradient>
<radialGradient id="gO" cx="0.66" cy="0.32" r="0.85" fx="0.68" fy="0.3">
<stop offset="0" stop-color="#ffd0d0"/><stop offset="0.07" stop-color="#ff4040"/><stop offset="0.3" stop-color="#ff0000"/><stop offset="0.65" stop-color="#d80000"/><stop offset="0.9" stop-color="#a00000"/><stop offset="1" stop-color="#880000"/></radialGradient>
<radialGradient id="gN" cx="0.66" cy="0.32" r="0.85" fx="0.68" fy="0.3">
<stop offset="0" stop-color="#d0d8ff"/><stop offset="0.07" stop-color="#3040ff"/><stop offset="0.3" stop-color="#0010ff"/><stop offset="0.65" stop-color="#0008d0"/><stop offset="0.9" stop-color="#0006a0"/><stop offset="1" stop-color="#000488"/></radialGradient>
</defs><g stroke="#e0e0e0" stroke-width="1" fill="none"><path d="M56.5 57V22M56.5 57.5H90"/></g><path d="M53 34L56.5 20L60 34Z M81 54L95 57.5L81 61Z" fill="#f0f0f0"/><text x="52.5" y="15" font-size="11" fill="#e0e0e0">b</text><text x="99" y="60" font-size="11" fill="#e8e8e8">a</text><polygon points="239.6,67.5 262.6,108.3 251.2,168.0 217.5,187.0 194.3,144.9 205.3,85.1" fill="#433158"/><polygon points="160.4,432.3 188.3,462.4 193.1,522.6 173.4,552.8 148.1,523.3 141.7,463.1" fill="#007f7d"/><polygon points="532.0,91.9 552.0,122.4 545.5,182.7 518.3,212.6 500.1,181.8 506.6,122.4" fill="#007f7d"/><polygon points="575.1,458.5 609.6,478.1 620.0,537.8 597.5,579.0 563.0,560.2 552.7,500.5" fill="#433158"/><defs><clipPath id="pA"><polygon points="239.6,67.5 262.6,108.3 251.2,168.0 217.5,187.0 194.3,144.9 205.3,85.1"/></clipPath><clipPath id="pB"><polygon points="160.4,432.3 188.3,462.4 193.1,522.6 173.4,552.8 148.1,523.3 141.7,463.1"/></clipPath><clipPath id="pC"><polygon points="532.0,91.9 552.0,122.4 545.5,182.7 518.3,212.6 500.1,181.8 506.6,122.4"/></clipPath><clipPath id="pD"><polygon points="575.1,458.5 609.6,478.1 620.0,537.8 597.5,579.0 563.0,560.2 552.7,500.5"/></clipPath></defs><path d="M213.9 276.4L224.8 248.3M213.9 276.4L170.7 324.7M205.8 432.3L177.0 442.5M562.8 214.0L535.8 203.8M528.7 321.4L572.3 369.2M572.3 369.2L583.0 398.6" stroke="#a88400" stroke-width="3.3" fill="none"/><path d="M213.9 276.4L224.8 248.3M213.9 276.4L170.7 324.7M205.8 432.3L177.0 442.5M562.8 214.0L535.8 203.8M528.7 321.4L572.3 369.2M572.3 369.2L583.0 398.6" stroke="#f8d000" stroke-width="2.1" fill="none"/><circle cx="213.9" cy="276.4" r="12.4" fill="url(#gC)"/><circle cx="572.3" cy="369.2" r="12.4" fill="url(#gC)"/><circle cx="657.7" cy="302.0" r="5.6" fill="url(#gH)"/><circle cx="299.5" cy="343.5" r="5.6" fill="url(#gH)"/><circle cx="535.8" cy="203.8" r="5.6" fill="url(#gH)"/><circle cx="177.0" cy="442.5" r="5.6" fill="url(#gH)"/><path d="M239.6 67.5L262.6 108.3M262.6 108.3L251.2 168.0M251.2 168.0L217.5 187.0M217.5 187.0L194.3 144.9M194.3 144.9L205.3 85.1M205.3 85.1L239.6 67.5M239.6 67.5L247.3 27.3M205.3 85.1L189.0 57.6M262.6 108.3L285.8 96.1M194.3 144.9L171.2 156.6M251.2 168.0L267.5 194.9M217.5 187.0L200.4 250.8M200.4 250.8L157.3 254.4M200.4 250.8L228.0 290.5M170.7 324.7L120.7 326.4M170.7 324.7L207.8 368.3M207.8 368.3L257.8 328.8M228.0 290.5L274.4 323.5M228.0 290.5L257.8 328.8M274.4 323.5L276.0 363.2M274.4 323.5L334.3 293.9M334.3 293.9L382.6 328.6M274.4 323.5L308.7 338.3M308.7 338.3L364.8 339.5M364.8 339.5L382.6 328.6M334.3 293.9L333.1 254.2M382.6 328.6L394.1 346.9M382.6 328.6L388.0 366.9M382.6 328.6L436.0 298.0M436.0 298.0L452.8 301.5M207.8 368.3L205.8 432.3M205.8 432.3L243.2 447.2M205.8 432.3L188.3 462.4M160.4 432.3L188.3 462.4M188.3 462.4L193.1 522.6M193.1 522.6L173.4 552.8M173.4 552.8L148.1 523.3M148.1 523.3L141.7 463.1M141.7 463.1L160.4 432.3M160.4 432.3L155.1 392.1M141.7 463.1L124.3 442.8M148.1 523.3L136.0 543.9M193.1 522.6L208.9 544.2M173.4 552.8L177.2 594.6M532.0 91.9L552.0 122.4M552.0 122.4L545.5 182.7M545.5 182.7L518.3 212.6M518.3 212.6L500.1 181.8M500.1 181.8L506.6 122.4M506.6 122.4L532.0 91.9M532.0 91.9L535.8 52.1M506.6 122.4L494.3 102.2M552.0 122.4L567.5 101.3M500.1 181.8L483.1 203.2M518.3 212.6L513.9 254.1M562.8 214.0L545.5 182.7M562.8 214.0L601.1 199.4M562.8 214.0L566.0 278.2M479.0 320.2L528.7 321.4M528.7 321.4L566.0 278.2M566.0 278.2L615.6 317.7M586.0 355.8L633.0 322.5M586.0 355.8L615.6 317.7M558.6 394.9L586.0 355.8M558.6 394.9L515.8 392.4M558.6 394.9L575.1 458.5M633.0 322.5L634.6 282.9M633.0 322.5L667.7 308.3M667.7 308.3L722.5 307.0M722.5 307.0L741.1 317.7M741.1 317.7L746.1 279.6M741.1 317.7L752.8 299.5M741.1 317.7L794.7 348.6M794.7 348.6L810.8 345.1M633.0 322.5L692.6 351.8M692.6 351.8L741.1 317.7M692.6 351.8L691.4 391.7M575.1 458.5L609.6 478.1M609.6 478.1L620.0 537.8M620.0 537.8L597.5 579.0M597.5 579.0L563.0 560.2M563.0 560.2L552.7 500.5M552.7 500.5L575.1 458.5M609.6 478.1L625.6 450.9M552.7 500.5L528.8 489.3M620.0 537.8L643.8 550.1M563.0 560.2L547.1 588.3M597.5 579.0L605.1 618.3" stroke="#a88400" stroke-width="3.3" fill="none"/><path d="M239.6 67.5L262.6 108.3M262.6 108.3L251.2 168.0M251.2 168.0L217.5 187.0M217.5 187.0L194.3 144.9M194.3 144.9L205.3 85.1M205.3 85.1L239.6 67.5M239.6 67.5L247.3 27.3M205.3 85.1L189.0 57.6M262.6 108.3L285.8 96.1M194.3 144.9L171.2 156.6M251.2 168.0L267.5 194.9M217.5 187.0L200.4 250.8M200.4 250.8L157.3 254.4M200.4 250.8L228.0 290.5M170.7 324.7L120.7 326.4M170.7 324.7L207.8 368.3M207.8 368.3L257.8 328.8M228.0 290.5L274.4 323.5M228.0 290.5L257.8 328.8M274.4 323.5L276.0 363.2M274.4 323.5L334.3 293.9M334.3 293.9L382.6 328.6M274.4 323.5L308.7 338.3M308.7 338.3L364.8 339.5M364.8 339.5L382.6 328.6M334.3 293.9L333.1 254.2M382.6 328.6L394.1 346.9M382.6 328.6L388.0 366.9M382.6 328.6L436.0 298.0M436.0 298.0L452.8 301.5M207.8 368.3L205.8 432.3M205.8 432.3L243.2 447.2M205.8 432.3L188.3 462.4M160.4 432.3L188.3 462.4M188.3 462.4L193.1 522.6M193.1 522.6L173.4 552.8M173.4 552.8L148.1 523.3M148.1 523.3L141.7 463.1M141.7 463.1L160.4 432.3M160.4 432.3L155.1 392.1M141.7 463.1L124.3 442.8M148.1 523.3L136.0 543.9M193.1 522.6L208.9 544.2M173.4 552.8L177.2 594.6M532.0 91.9L552.0 122.4M552.0 122.4L545.5 182.7M545.5 182.7L518.3 212.6M518.3 212.6L500.1 181.8M500.1 181.8L506.6 122.4M506.6 122.4L532.0 91.9M532.0 91.9L535.8 52.1M506.6 122.4L494.3 102.2M552.0 122.4L567.5 101.3M500.1 181.8L483.1 203.2M518.3 212.6L513.9 254.1M562.8 214.0L545.5 182.7M562.8 214.0L601.1 199.4M562.8 214.0L566.0 278.2M479.0 320.2L528.7 321.4M528.7 321.4L566.0 278.2M566.0 278.2L615.6 317.7M586.0 355.8L633.0 322.5M586.0 355.8L615.6 317.7M558.6 394.9L586.0 355.8M558.6 394.9L515.8 392.4M558.6 394.9L575.1 458.5M633.0 322.5L634.6 282.9M633.0 322.5L667.7 308.3M667.7 308.3L722.5 307.0M722.5 307.0L741.1 317.7M741.1 317.7L746.1 279.6M741.1 317.7L752.8 299.5M741.1 317.7L794.7 348.6M794.7 348.6L810.8 345.1M633.0 322.5L692.6 351.8M692.6 351.8L741.1 317.7M692.6 351.8L691.4 391.7M575.1 458.5L609.6 478.1M609.6 478.1L620.0 537.8M620.0 537.8L597.5 579.0M597.5 579.0L563.0 560.2M563.0 560.2L552.7 500.5M552.7 500.5L575.1 458.5M609.6 478.1L625.6 450.9M552.7 500.5L528.8 489.3M620.0 537.8L643.8 550.1M563.0 560.2L547.1 588.3M597.5 579.0L605.1 618.3" stroke="#f8d000" stroke-width="2.1" fill="none"/><path d="M455.8 303.5L473.0 316.2" stroke="#e0e0e0" stroke-width="1" stroke-dasharray="1.5 1.5"/><circle cx="239.6" cy="67.5" r="12.4" fill="url(#gC)"/><circle cx="262.6" cy="108.3" r="12.4" fill="url(#gC)"/><circle cx="251.2" cy="168.0" r="12.4" fill="url(#gC)"/><circle cx="217.5" cy="187.0" r="12.4" fill="url(#gC)"/><circle cx="194.3" cy="144.9" r="12.4" fill="url(#gC)"/><circle cx="205.3" cy="85.1" r="12.4" fill="url(#gC)"/><circle cx="247.3" cy="27.3" r="5.6" fill="url(#gH)"/><circle cx="189.0" cy="57.6" r="5.6" fill="url(#gH)"/><circle cx="285.8" cy="96.1" r="5.6" fill="url(#gH)"/><circle cx="171.2" cy="156.6" r="5.6" fill="url(#gH)"/><circle cx="267.5" cy="194.9" r="5.6" fill="url(#gH)"/><circle cx="200.4" cy="250.8" r="12.4" fill="url(#gC)"/><circle cx="157.3" cy="254.4" r="5.6" fill="url(#gH)"/><circle cx="224.8" cy="248.3" r="5.6" fill="url(#gH)"/><circle cx="228.0" cy="290.5" r="11.2" fill="url(#gO)"/><circle cx="120.7" cy="326.4" r="11.2" fill="url(#gO)"/><circle cx="170.7" cy="324.7" r="12.4" fill="url(#gC)"/><circle cx="207.8" cy="368.3" r="11.8" fill="url(#gN)"/><circle cx="257.8" cy="328.8" r="12.4" fill="url(#gC)"/><circle cx="274.4" cy="323.5" r="12.4" fill="url(#gC)"/><circle cx="276.0" cy="363.2" r="5.6" fill="url(#gH)"/><circle cx="334.3" cy="293.9" r="12.4" fill="url(#gC)"/><circle cx="333.1" cy="254.2" r="5.6" fill="url(#gH)"/><circle cx="345.3" cy="291.5" r="5.6" fill="url(#gH)"/><circle cx="308.7" cy="338.3" r="12.4" fill="url(#gC)"/><circle cx="364.8" cy="339.5" r="12.4" fill="url(#gC)"/><circle cx="382.6" cy="328.6" r="12.4" fill="url(#gC)"/><circle cx="394.1" cy="346.9" r="5.6" fill="url(#gH)"/><circle cx="388.0" cy="366.9" r="5.6" fill="url(#gH)"/><circle cx="436.0" cy="298.0" r="11.2" fill="url(#gO)"/><circle cx="452.8" cy="301.5" r="5.6" fill="url(#gH)"/><circle cx="205.8" cy="432.3" r="12.4" fill="url(#gC)"/><circle cx="243.2" cy="447.2" r="5.6" fill="url(#gH)"/><circle cx="160.4" cy="432.3" r="12.4" fill="url(#gC)"/><circle cx="188.3" cy="462.4" r="12.4" fill="url(#gC)"/><circle cx="193.1" cy="522.6" r="12.4" fill="url(#gC)"/><circle cx="173.4" cy="552.8" r="12.4" fill="url(#gC)"/><circle cx="148.1" cy="523.3" r="12.4" fill="url(#gC)"/><circle cx="141.7" cy="463.1" r="12.4" fill="url(#gC)"/><circle cx="155.1" cy="392.1" r="5.6" fill="url(#gH)"/><circle cx="124.3" cy="442.8" r="5.6" fill="url(#gH)"/><circle cx="136.0" cy="543.9" r="5.6" fill="url(#gH)"/><circle cx="208.9" cy="544.2" r="5.6" fill="url(#gH)"/><circle cx="177.2" cy="594.6" r="5.6" fill="url(#gH)"/><circle cx="532.0" cy="91.9" r="12.4" fill="url(#gC)"/><circle cx="552.0" cy="122.4" r="12.4" fill="url(#gC)"/><circle cx="545.5" cy="182.7" r="12.4" fill="url(#gC)"/><circle cx="518.3" cy="212.6" r="12.4" fill="url(#gC)"/><circle cx="500.1" cy="181.8" r="12.4" fill="url(#gC)"/><circle cx="506.6" cy="122.4" r="12.4" fill="url(#gC)"/><circle cx="535.8" cy="52.1" r="5.6" fill="url(#gH)"/><circle cx="494.3" cy="102.2" r="5.6" fill="url(#gH)"/><circle cx="567.5" cy="101.3" r="5.6" fill="url(#gH)"/><circle cx="483.1" cy="203.2" r="5.6" fill="url(#gH)"/><circle cx="513.9" cy="254.1" r="5.6" fill="url(#gH)"/><circle cx="562.8" cy="214.0" r="12.4" fill="url(#gC)"/><circle cx="601.1" cy="199.4" r="5.6" fill="url(#gH)"/><circle cx="566.0" cy="278.2" r="11.8" fill="url(#gN)"/><circle cx="479.0" cy="320.2" r="11.2" fill="url(#gO)"/><circle cx="528.7" cy="321.4" r="12.4" fill="url(#gC)"/><circle cx="615.6" cy="317.7" r="12.4" fill="url(#gC)"/><circle cx="633.0" cy="322.5" r="12.4" fill="url(#gC)"/><circle cx="634.6" cy="282.9" r="5.6" fill="url(#gH)"/><circle cx="586.0" cy="355.8" r="11.2" fill="url(#gO)"/><circle cx="583.0" cy="398.6" r="5.6" fill="url(#gH)"/><circle cx="558.6" cy="394.9" r="12.4" fill="url(#gC)"/><circle cx="515.8" cy="392.4" r="5.6" fill="url(#gH)"/><circle cx="667.7" cy="308.3" r="12.4" fill="url(#gC)"/><circle cx="722.5" cy="307.0" r="12.4" fill="url(#gC)"/><circle cx="741.1" cy="317.7" r="12.4" fill="url(#gC)"/><circle cx="746.1" cy="279.6" r="5.6" fill="url(#gH)"/><circle cx="752.8" cy="299.5" r="5.6" fill="url(#gH)"/><circle cx="692.6" cy="351.8" r="12.4" fill="url(#gC)"/><circle cx="702.6" cy="355.0" r="5.6" fill="url(#gH)"/><circle cx="691.4" cy="391.7" r="5.6" fill="url(#gH)"/><circle cx="794.7" cy="348.6" r="11.2" fill="url(#gO)"/><circle cx="810.8" cy="345.1" r="5.6" fill="url(#gH)"/><circle cx="575.1" cy="458.5" r="12.4" fill="url(#gC)"/><circle cx="609.6" cy="478.1" r="12.4" fill="url(#gC)"/><circle cx="620.0" cy="537.8" r="12.4" fill="url(#gC)"/><circle cx="597.5" cy="579.0" r="12.4" fill="url(#gC)"/><circle cx="563.0" cy="560.2" r="12.4" fill="url(#gC)"/><circle cx="552.7" cy="500.5" r="12.4" fill="url(#gC)"/><circle cx="625.6" cy="450.9" r="5.6" fill="url(#gH)"/><circle cx="528.8" cy="489.3" r="5.6" fill="url(#gH)"/><circle cx="643.8" cy="550.1" r="5.6" fill="url(#gH)"/><circle cx="547.1" cy="588.3" r="5.6" fill="url(#gH)"/><circle cx="605.1" cy="618.3" r="5.6" fill="url(#gH)"/><clipPath id="cl_a2"><circle cx="200.3" cy="85.1" r="12.4"/></clipPath><circle cx="205.3" cy="85.1" r="12.4" fill="#7c569a" opacity="0.42"/><g clip-path="url(#cl_a2)"><circle cx="205.3" cy="85.1" r="12.4" fill="url(#gC)"/></g><clipPath id="cl_a4"><circle cx="189.3" cy="144.9" r="12.4"/></clipPath><circle cx="194.3" cy="144.9" r="12.4" fill="#7c569a" opacity="0.42"/><g clip-path="url(#cl_a4)"><circle cx="194.3" cy="144.9" r="12.4" fill="url(#gC)"/></g><clipPath id="cl_a6"><circle cx="217.5" cy="192.0" r="12.4"/></clipPath><circle cx="217.5" cy="187.0" r="12.4" fill="#7c569a" opacity="0.42"/><g clip-path="url(#cl_a6)"><circle cx="217.5" cy="187.0" r="12.4" fill="url(#gC)"/></g><clipPath id="cl_b2"><circle cx="195.1" cy="462.4" r="12.4"/></clipPath><circle cx="188.3" cy="462.4" r="12.4" fill="#00acac" opacity="0.66"/><g clip-path="url(#cl_b2)"><circle cx="188.3" cy="462.4" r="12.4" fill="url(#gC)"/></g><clipPath id="cl_b3"><circle cx="199.9" cy="522.6" r="12.4"/></clipPath><circle cx="193.1" cy="522.6" r="12.4" fill="#00acac" opacity="0.66"/><g clip-path="url(#cl_b3)"><circle cx="193.1" cy="522.6" r="12.4" fill="url(#gC)"/></g><clipPath id="cl_c2"><circle cx="558.8" cy="122.4" r="12.4"/></clipPath><circle cx="552.0" cy="122.4" r="12.4" fill="#00acac" opacity="0.66"/><g clip-path="url(#cl_c2)"><circle cx="552.0" cy="122.4" r="12.4" fill="url(#gC)"/></g><clipPath id="cl_c3"><circle cx="552.3" cy="182.7" r="12.4"/></clipPath><circle cx="545.5" cy="182.7" r="12.4" fill="#00acac" opacity="0.66"/><g clip-path="url(#cl_c3)"><circle cx="545.5" cy="182.7" r="12.4" fill="url(#gC)"/></g><clipPath id="cl_d6"><circle cx="547.7" cy="500.5" r="12.4"/></clipPath><circle cx="552.7" cy="500.5" r="12.4" fill="#7c569a" opacity="0.42"/><g clip-path="url(#cl_d6)"><circle cx="552.7" cy="500.5" r="12.4" fill="url(#gC)"/></g><clipPath id="cl_d5"><circle cx="558.0" cy="560.2" r="12.4"/></clipPath><circle cx="563.0" cy="560.2" r="12.4" fill="#7c569a" opacity="0.42"/><g clip-path="url(#cl_d5)"><circle cx="563.0" cy="560.2" r="12.4" fill="url(#gC)"/></g><path d="M798.7 347.7L805.6 346.2M440.2 298.9L447.4 300.4M692.6 351.8L702.6 355.0M727.1 309.7L730.3 311.5M743.4 314.1L752.8 299.5M210.4 82.5L216.6 79.3M222.6 184.2L228.3 180.9M580.3 461.4L585.8 464.6M568.2 563.0L574.0 566.2M541.4 187.2L537.1 192.0M549.0 117.8L545.2 112.0M184.1 457.9L179.9 453.4M190.1 527.1L186.4 532.9M633.5 310.6L634.0 298.7M156.7 438.5L154.0 442.8M166.0 438.3L169.3 441.9M525.9 99.2L522.9 102.9M536.8 99.2L539.2 102.9M505.4 120.4L499.8 111.3M498.4 183.9L491.6 192.5M516.1 208.9L512.1 202.1M560.7 210.2L556.7 203.0M146.9 525.4L142.1 533.6M170.4 549.3L165.1 543.1M140.0 461.1L132.1 451.9" stroke="#a88400" stroke-width="3.3" fill="none"/><path d="M798.7 347.7L805.6 346.2M440.2 298.9L447.4 300.4M692.6 351.8L702.6 355.0M727.1 309.7L730.3 311.5M743.4 314.1L752.8 299.5M210.4 82.5L216.6 79.3M222.6 184.2L228.3 180.9M580.3 461.4L585.8 464.6M568.2 563.0L574.0 566.2M541.4 187.2L537.1 192.0M549.0 117.8L545.2 112.0M184.1 457.9L179.9 453.4M190.1 527.1L186.4 532.9M633.5 310.6L634.0 298.7M156.7 438.5L154.0 442.8M166.0 438.3L169.3 441.9M525.9 99.2L522.9 102.9M536.8 99.2L539.2 102.9M505.4 120.4L499.8 111.3M498.4 183.9L491.6 192.5M516.1 208.9L512.1 202.1M560.7 210.2L556.7 203.0M146.9 525.4L142.1 533.6M170.4 549.3L165.1 543.1M140.0 461.1L132.1 451.9" stroke="#f8d000" stroke-width="2.1" fill="none"/><circle cx="810.8" cy="345.1" r="5.6" fill="url(#gH)"/><circle cx="452.8" cy="301.5" r="5.6" fill="url(#gH)"/><circle cx="702.6" cy="355.0" r="5.6" fill="url(#gH)"/><text x="227.3" y="134.6" font-size="17.5" fill="#f4f4f4" text-anchor="middle">A</text><text x="166.1" y="500.5" font-size="17.5" fill="#f4f4f4" text-anchor="middle">B</text><rect x="5.5" y="513.5" width="26" height="112" fill="none" stroke="#ffffff" stroke-width="2"/><circle cx="15" cy="523.7" r="8.6" fill="url(#gN)"/><text x="25.2" y="525.9" font-size="8" font-weight="bold" fill="#fff">N</text><circle cx="15" cy="546.7" r="8.6" fill="url(#gO)"/><text x="25.2" y="548.9" font-size="8" font-weight="bold" fill="#fff">O</text><circle cx="15" cy="569.7" r="8.6" fill="url(#gH)"/><text x="25.2" y="571.9" font-size="8" font-weight="bold" fill="#fff">H</text><circle cx="15" cy="592.7" r="8.6" fill="url(#gC)"/><text x="25.2" y="594.9" font-size="8" font-weight="bold" fill="#fff">C</text><circle cx="15" cy="615.7" r="8.6" fill="url(#gH)"/><text x="25.2" y="617.9" font-size="8" font-weight="bold" fill="#fff">?</text></svg>
<div id="rp" class="a"><div class="a rbox" style="top:0;height:380px"></div><div class="a rbox" style="top:385px;height:247px"></div></div>
<div id="tb2" class="a"></div>
<svg class="a" style="left:0;top:0" width="964" height="820"><rect x="11" y="778" width="1" height="1" fill="#5a6684"/><rect x="15" y="778" width="1" height="1" fill="#5a6684"/><rect x="13" y="780" width="1" height="1" fill="#5a6684"/><rect x="11" y="782" width="1" height="1" fill="#5a6684"/><rect x="15" y="782" width="1" height="1" fill="#5a6684"/><rect x="13" y="784" width="1" height="1" fill="#5a6684"/><rect x="11" y="786" width="1" height="1" fill="#5a6684"/><rect x="15" y="786" width="1" height="1" fill="#5a6684"/><rect x="13" y="788" width="1" height="1" fill="#5a6684"/><rect x="11" y="790" width="1" height="1" fill="#5a6684"/><rect x="15" y="790" width="1" height="1" fill="#5a6684"/><rect x="13" y="792" width="1" height="1" fill="#5a6684"/><rect x="11" y="794" width="1" height="1" fill="#5a6684"/><rect x="15" y="794" width="1" height="1" fill="#5a6684"/><rect x="26" y="779.3" width="15.6" height="14.2" fill="#fff"/><rect x="26" y="779.3" width="7" height="14.2" fill="#a8ccf0"/><path d="M26.6 779.3v14.2h15" stroke="#24246a" stroke-width="1.3" fill="none"/><rect x="26" y="779" width="7.5" height="1.6" fill="#24246a"/><rect x="33.5" y="779" width="8" height="1.6" fill="#aaa"/><path d="M30.5 786c0.5-2.5 5.5-3 7 0M37.5 788c-0.5 2.5-5.5 3-7 0" stroke="#c8963c" stroke-width="1.7" fill="none"/><path d="M37.5 783.5l0.4 3.2-3-0.6zM30.5 790.5l-0.4-3.2 3 0.6z" fill="#c8963c"/><rect x="48.6" y="779.7" width="12.4" height="11.1" fill="#ffffff" stroke="#111" stroke-width="1.3"/><rect x="49.3" y="780.4" width="11.0" height="2" fill="#24246a"/><path d="M50.5 784h7M50.5 786h7M50.5 788h4" stroke="#666" stroke-width="0.9"/><path d="M54 788.5h5v-2l4.5 3.6-4.5 3.6v-2h-5z" fill="#10e8f0" stroke="#0a4a6a" stroke-width="0.7"/><path d="M75.2 781.5l10.4 9.4" stroke="#0a0a5a" stroke-width="2"/><path d="M75.2 781.5l3.2 3" stroke="#f0e000" stroke-width="2.2"/><circle cx="76.2" cy="788.4" r="2.4" fill="#8a8a30"/><circle cx="72" cy="785" r="2.4" fill="#f4f000" stroke="#333" stroke-width="0.4"/><circle cx="72" cy="791.4" r="2.4" fill="#f4f000" stroke="#333" stroke-width="0.4"/><path d="M80 779.3h1.4M83 781.2h1.4M70 779.2h1" stroke="#111" stroke-width="1.4"/><path d="M80.7 778.6v1.4M83.7 780.5v1.4" stroke="#111" stroke-width="1.4"/><rect x="96" y="779.8" width="11.6" height="11.2" fill="#fff" stroke="#8a8a8a" stroke-width="1"/><path d="M92.8 793l7-7.3" stroke="#700000" stroke-width="1.6"/><path d="M96.2 782.8l3.8-2.3 4.8 3.7-0.6 2.6-2.4-0.8-1.6 1.6-1.5-1.3 0.6-1.6z" fill="#f4e800" stroke="#3a3a3a" stroke-width="0.6"/><path d="M113.7 784.2h6l-3 3z" fill="#1b2a4a"/><rect x="124.0" y="777" width="1" height="20" fill="#7a8294"/><rect x="125.0" y="777" width="1" height="20" fill="#f4f6fa"/><path d="M131 780.2h4l4 3.8 4-3.8h4l-5.5 6 5.5 6h-4l-4-3.8-4 3.8h-4l5.5-6z" fill="#111"/><circle cx="138.8" cy="786.1" r="4" fill="#f4f000" stroke="#f000f0" stroke-width="1.9"/><rect x="152.0" y="777" width="1" height="20" fill="#7a8294"/><rect x="153.0" y="777" width="1" height="20" fill="#f4f6fa"/><path d="M165 781l4.5-0.7 5.5 5.3-5 5.9-7.5-5z" fill="#dce4ee" stroke="#111" stroke-width="1.1"/><path d="M169.5 780.3l5.5 5.3-2 2-5.5-5.5z" fill="#8a8a8a"/><path d="M165.2 784.3l5.4 5.6" stroke="#f0e400" stroke-width="2.3"/><path d="M161.4 789.6v-3.2l4.6-5.4" stroke="#111" stroke-width="1.7" fill="none"/><path d="M162.5 786.5l7.5 5" stroke="#111" stroke-width="1.1"/><path d="M181.5 783h6.5M184.8 779.5v7" stroke="#111" stroke-width="1.8"/><circle cx="193.5" cy="783" r="3.5" fill="#f0f000" stroke="#111" stroke-width="0.9"/><circle cx="185" cy="790" r="3.5" fill="#f0f000" stroke="#111" stroke-width="0.9"/><circle cx="193.5" cy="790" r="3.5" fill="#f0f000" stroke="#111" stroke-width="0.9"/><path d="M203.2 786h7.5M207 782.3v7.5" stroke="#111" stroke-width="1.9"/><circle cx="215.2" cy="785.8" r="3.5" fill="#f0f000" stroke="#111" stroke-width="0.9"/><path d="M229.8 782.3c0-3.3 6.6-3.6 6.6-0.3 0 2.2-3.4 2.4-3.4 4.9v0.6" stroke="#111" stroke-width="2" fill="none"/><rect x="232.1" y="789.4" width="1.8" height="1.8" fill="#111"/><circle cx="228" cy="790.8" r="2.7" fill="none" stroke="#111" stroke-width="1.2"/><circle cx="238.2" cy="790.8" r="2.7" fill="none" stroke="#111" stroke-width="1.2"/><path d="M249.5 781.3h11v9.9h-11z" stroke="#1a1aff" stroke-width="1.5" fill="none"/><path d="M249.5 781.3l11 9.9M260.5 781.3l-11 9.9" stroke="#1a1aff" stroke-width="0.9" fill="none"/><circle cx="249.5" cy="781.3" r="2.3" fill="#d6dbe9" stroke="#111" stroke-width="1.1"/><circle cx="260.5" cy="781.3" r="2.3" fill="#d6dbe9" stroke="#111" stroke-width="1.1"/><circle cx="249.5" cy="791.2" r="2.3" fill="#d6dbe9" stroke="#111" stroke-width="1.1"/><circle cx="260.5" cy="791.2" r="2.3" fill="#d6dbe9" stroke="#111" stroke-width="1.1"/><path d="M276.4 779.3h3.9v5.2h3l-5 4.6-5-4.6h3.1z" fill="#fff" stroke="#111" stroke-width="1.1"/><circle cx="272.6" cy="790.8" r="2.6" fill="none" stroke="#111" stroke-width="1.2"/><circle cx="282.4" cy="790.8" r="2.6" fill="none" stroke="#111" stroke-width="1.2"/><circle cx="299" cy="786.5" r="5.6" fill="#fff" stroke="#111" stroke-width="1.2" stroke-dasharray="1 1"/><circle cx="299" cy="786.5" r="3.3" fill="#7a7200" stroke="#333" stroke-width="0.6"/><path d="M313.0 784.5h6l-3 3z" fill="#1b2a4a"/><rect x="323.0" y="777" width="1" height="20" fill="#7a8294"/><rect x="324.0" y="777" width="1" height="20" fill="#f4f6fa"/><path d="M330.5 785.8L334.2 780.5L341.8 780.5L345.5 785.8L341.8 791.0L334.2 791.0Z" fill="none" stroke="#0a0aff" stroke-width="1.7"/><path d="M352.5 785.8L356.2 780.5L363.8 780.5L367.5 785.8L363.8 791.0L356.2 791.0Z" fill="none" stroke="#0a0aff" stroke-width="1.7"/><path d="M356.2 780.55h7.5l3.75 5.25-3.75 5.25h-3" fill="none" stroke="#f0f000" stroke-width="1.7"/><path d="M377 782.5h9v9h-9zM380 780h9v9" stroke="#888" stroke-width="1" fill="none"/><path d="M376.0 782.0L378.5 780.0L383.5 780.0L386.0 782.0L383.5 784.0L378.5 784.0Z" fill="none" stroke="#1a1aff" stroke-width="1.3"/><path d="M380.0 791.0L382.5 789.0L387.5 789.0L390.0 791.0L387.5 793.0L382.5 793.0Z" fill="none" stroke="#1a1aff" stroke-width="1.3"/><path d="M397.4 779.8L403.4 785.8M403.4 779.8L397.4 785.8M405.6 779.8L411.6 785.8M411.6 779.8L405.6 785.8M397.4 787.8L403.4 793.8M403.4 787.8L397.4 793.8M405.6 787.8L411.6 793.8M411.6 787.8L405.6 793.8" stroke="#0a0aff" stroke-width="1.5"/><path d="M400.4 782.8L408.6 790.8M408.6 782.8L400.4 790.8" stroke="#111" stroke-width="1.8"/><rect x="399.2" y="781.6" width="2.4" height="2.4" fill="#111"/><rect x="407.4" y="781.6" width="2.4" height="2.4" fill="#111"/><rect x="399.2" y="789.6" width="2.4" height="2.4" fill="#111"/><rect x="407.4" y="789.6" width="2.4" height="2.4" fill="#111"/><path d="M419.3 779.8L425.3 785.8M425.3 779.8L419.3 785.8M427.5 779.8L433.5 785.8M433.5 779.8L427.5 785.8M419.3 787.8L425.3 793.8M425.3 787.8L419.3 793.8M427.5 787.8L433.5 793.8M433.5 787.8L427.5 793.8" stroke="#d01000" stroke-width="1.5"/><path d="M422.3 782.8L430.5 790.8M430.5 782.8L422.3 790.8" stroke="#111" stroke-width="1.8"/><rect x="421.1" y="781.6" width="2.4" height="2.4" fill="#111"/><rect x="429.3" y="781.6" width="2.4" height="2.4" fill="#111"/><rect x="421.1" y="789.6" width="2.4" height="2.4" fill="#111"/><rect x="429.3" y="789.6" width="2.4" height="2.4" fill="#111"/><rect x="439.5" y="777" width="1" height="20" fill="#7a8294"/><rect x="440.5" y="777" width="1" height="20" fill="#f4f6fa"/><path d="M451 789l5.5-6M452 790l5.5-6" stroke="#0a0aff" stroke-width="0.9"/><circle cx="449.6" cy="790.4" r="3.2" fill="#a8d0f0" stroke="#111" stroke-width="0.9"/><circle cx="457.6" cy="782.2" r="3.2" fill="#f0f000" stroke="#111" stroke-width="0.9"/><path d="M470 780l4 4M483 780l-4 4M470 793l4-4M483 793l-4-4" stroke="#1a1aff" stroke-width="1.6"/><path d="M471.0 786.5L473.8 783.5L479.2 783.5L482.0 786.5L479.2 789.5L473.8 789.5Z" fill="none" stroke="#111" stroke-width="1.2"/><rect x="468.5" y="779.0" width="2.6" height="2" fill="#f0f000"/><rect x="481.0" y="779.0" width="2.6" height="2" fill="#f0f000"/><rect x="468.5" y="792.0" width="2.6" height="2" fill="#f0f000"/><rect x="481.0" y="792.0" width="2.6" height="2" fill="#f0f000"/><path d="M494.5 782.5L497.2 779.4L502.8 779.4L505.5 782.5L502.8 785.6L497.2 785.6Z" fill="none" stroke="#f0e000" stroke-width="1.3"/><path d="M491.0 790.5L493.8 787.4L499.2 787.4L502.0 790.5L499.2 793.6L493.8 793.6Z" fill="none" stroke="#111" stroke-width="1.3"/><path d="M516.5 782.5L519.2 779.4L524.8 779.4L527.5 782.5L524.8 785.6L519.2 785.6Z" fill="none" stroke="#c01800" stroke-width="1.3"/><path d="M513.0 790.5L515.8 787.4L521.2 787.4L524.0 790.5L521.2 793.6L515.8 793.6Z" fill="none" stroke="#111" stroke-width="1.3"/><rect x="533.0" y="777" width="1" height="20" fill="#7a8294"/><rect x="534.0" y="777" width="1" height="20" fill="#f4f6fa"/><path d="M543.5 779.6h12v10.5h-12z" stroke="#111" stroke-width="1.1" fill="none"/><path d="M543.5 779.6l-3.5 3.3M555.5 779.6l-3.5 3.3M555.5 790.1l-3.5 3.3M543.5 790.1l-3.5 3.3" stroke="#1a1aff" stroke-width="0.9"/><path d="M540 782.9h12v10.5h-12z" stroke="#0a0aff" stroke-width="1.4" fill="none"/><path d="M570.5 779.3l7.3 7-7.3 7-7.3-7z" fill="#fff" stroke="#111" stroke-width="1.2"/><path d="M570.5 779.3v14M563.2 786.3l4.5 1.5h6l4.1-1.5" stroke="#111" stroke-width="0.9" fill="none"/><path d="M585 785h15M585 790h15" stroke="#0a0aff" stroke-width="1.3"/><circle cx="586.5" cy="785" r="1.6" fill="#f0f000"/><circle cx="586.5" cy="790" r="1.6" fill="#f0f000"/><circle cx="590.5" cy="785" r="1.6" fill="#f0f000"/><circle cx="590.5" cy="790" r="1.6" fill="#f0f000"/><circle cx="594.5" cy="785" r="1.6" fill="#f0f000"/><circle cx="594.5" cy="790" r="1.6" fill="#f0f000"/><circle cx="598.5" cy="785" r="1.6" fill="#f0f000"/><circle cx="598.5" cy="790" r="1.6" fill="#f0f000"/><path d="M584.5 783l15.5 10M600 782.5l-15.5 10.5" stroke="#f00000" stroke-width="1.9"/><path d="M606.5 784.7h6l-3 3z" fill="#1b2a4a"/><circle cx="620.4" cy="790.3" r="2.8" fill="#fff" stroke="#111" stroke-width="1"/><text x="622.3" y="787.2" font-size="9.5" font-weight="bold" fill="#111">Fe</text><rect x="638.5" y="777" width="1" height="20" fill="#7a8294"/><rect x="639.5" y="777" width="1" height="20" fill="#f4f6fa"/><rect x="645.6" y="779.6" width="15" height="13.5" fill="#d6dbe9" stroke="#0a0aff" stroke-width="1.2"/><path d="M648 786.3h10.5M653.1 781.5v9.8" stroke="#111" stroke-width="1.3"/><path d="M653.1 780.5l-2.2 2.5h4.4zM653.1 792.3l-2.2-2.5h4.4zM647 786.3l2.5-2.2v4.4zM659.5 786.3l-2.5-2.2v4.4z" fill="#111"/><circle cx="653.1" cy="786.3" r="2" fill="#f0f000"/><path d="M667.3 784.7h6l-3 3z" fill="#1b2a4a"/><rect x="677.0" y="777" width="1" height="20" fill="#7a8294"/><rect x="678.0" y="777" width="1" height="20" fill="#f4f6fa"/><text x="684.5" y="791.8" font-family="Liberation Serif" font-size="14" font-weight="bold" font-style="italic" fill="#0a0a8a">M</text><rect x="707.5" y="780.5" width="13" height="12" fill="#d0d4dc" stroke="#0a0a7a" stroke-width="1.2"/><circle cx="711.5" cy="785" r="2.8" fill="none" stroke="#f01010" stroke-width="0.9"/><circle cx="714.6" cy="787.2" r="3.5" fill="#108080"/><rect x="727.0" y="777" width="1" height="20" fill="#7a8294"/><rect x="728.0" y="777" width="1" height="20" fill="#f4f6fa"/><path d="M734 782h16M734 790.3h16M737.5 779v15M746 779v15" stroke="#777" stroke-width="1.1"/><path d="M755.0 789.5h6l-3 3z" fill="#222"/><rect x="765" y="772" width="1.5" height="26" fill="#f2f4f8"/><rect x="776" y="778" width="1" height="1" fill="#5a6684"/><rect x="780" y="778" width="1" height="1" fill="#5a6684"/><rect x="778" y="780" width="1" height="1" fill="#5a6684"/><rect x="776" y="782" width="1" height="1" fill="#5a6684"/><rect x="780" y="782" width="1" height="1" fill="#5a6684"/><rect x="778" y="784" width="1" height="1" fill="#5a6684"/><rect x="776" y="786" width="1" height="1" fill="#5a6684"/><rect x="780" y="786" width="1" height="1" fill="#5a6684"/><rect x="778" y="788" width="1" height="1" fill="#5a6684"/><rect x="776" y="790" width="1" height="1" fill="#5a6684"/><rect x="780" y="790" width="1" height="1" fill="#5a6684"/><rect x="778" y="792" width="1" height="1" fill="#5a6684"/><rect x="776" y="794" width="1" height="1" fill="#5a6684"/><rect x="780" y="794" width="1" height="1" fill="#5a6684"/><rect x="788.5" y="775.5" width="21" height="21" fill="#fdf3c8" stroke="#e8c878" stroke-width="1"/><path d="M795.2 778.8v12l2.7-2.6 2.2 4.6 1.9-0.9-2.1-4.3h3.5z" fill="#fff" stroke="#111" stroke-width="1.1"/><path d="M821 779.5l2 4.5 5.5 2.5-5.5 2.5-2 4.5-2-4.5-5.5-2.5 5.5-2.5z" fill="#111"/><path d="M821 781v11M814.5 786.5h13" stroke="#fff" stroke-width="0.8" stroke-dasharray="1 1"/><path d="M846.5 782.5a5.3 5.3 0 1 1 -2-1.3" stroke="#111" stroke-width="2" fill="none"/><path d="M842.5 779l4.5 1.2-2 3.8z" fill="#111"/><path d="M865 780v13M858.5 786.5h13" stroke="#111" stroke-width="2"/><path d="M865 779l-3 3.3h6zM865 794l-3-3.3h6zM858 786.5l3.3-3v6zM872 786.5l-3.3-3v6z" fill="#111"/><path d="M894.8 777l3 2.3 3-2.3M894.8 780l3 2.3 3-2.3" stroke="#3a4a6a" stroke-width="1" fill="none"/><path d="M894.6 789.6h6.4l-3.2 3.5z" fill="#222"/><rect x="905" y="772" width="1.5" height="26" fill="#f2f4f8"/><rect x="916" y="778" width="1" height="1" fill="#5a6684"/><rect x="920" y="778" width="1" height="1" fill="#5a6684"/><rect x="918" y="780" width="1" height="1" fill="#5a6684"/><rect x="916" y="782" width="1" height="1" fill="#5a6684"/><rect x="920" y="782" width="1" height="1" fill="#5a6684"/><rect x="918" y="784" width="1" height="1" fill="#5a6684"/><rect x="916" y="786" width="1" height="1" fill="#5a6684"/><rect x="920" y="786" width="1" height="1" fill="#5a6684"/><rect x="918" y="788" width="1" height="1" fill="#5a6684"/><rect x="916" y="790" width="1" height="1" fill="#5a6684"/><rect x="920" y="790" width="1" height="1" fill="#5a6684"/><rect x="918" y="792" width="1" height="1" fill="#5a6684"/><rect x="916" y="794" width="1" height="1" fill="#5a6684"/><rect x="920" y="794" width="1" height="1" fill="#5a6684"/><path d="M932.5 779.5v13.5h13.5M935.7 784v9M938.8 784v9M942 784v9M945.2 784v9" stroke="#111" stroke-width="1.1" fill="none"/><path d="M951.5 777l3 2.3 3-2.3M951.5 780l3 2.3 3-2.3" stroke="#3a4a6a" stroke-width="1" fill="none"/><path d="M951.4 789.6h6.4l-3.2 3.5z" fill="#222"/></svg>
<div id="status" class="a"></div>
<div class="a" style="left:346.7px;top:802px;width:96.5px;height:16px;background:#b9c4d6"></div><span class="a st" style="left:4.80px;top:803.60px;font-size:12px;transform:scaleX(0.9170);transform-origin:0 0">For Help, press F1</span><span class="a st" style="left:349.20px;top:803.60px;font-size:12px;color:#1a1a1a;transform:scaleX(0.9987);transform-origin:0 0">Manual</span><span class="a st" style="left:467.60px;top:803.60px;font-size:12px;transform:scaleX(0.8917);transform-origin:0 0">1.16937</span><span class="a st" style="left:583.40px;top:803.60px;font-size:12px;transform:scaleX(0.8421);transform-origin:0 0">0</span><span class="a st" style="left:609.00px;top:803.60px;font-size:12px;transform:scaleX(0.9600);transform-origin:0 0">49 parms</span><span class="a st" style="left:680.70px;top:803.60px;font-size:12px;transform:scaleX(0.9564);transform-origin:0 0">98 atoms</span><span class="a st" style="left:752.20px;top:803.60px;font-size:12px;transform:scaleX(0.9384);transform-origin:0 0">102 bonds</span><span class="a st" style="left:822.40px;top:803.60px;font-size:12px;transform:scaleX(0.9786);transform-origin:0 0">2 mol.</span><span class="a st" style="left:885.90px;top:803.60px;font-size:12px;transform:scaleX(0.9988);transform-origin:0 0">4 polyh.</span>
<div id="frame" class="a"></div>
</body></html>
